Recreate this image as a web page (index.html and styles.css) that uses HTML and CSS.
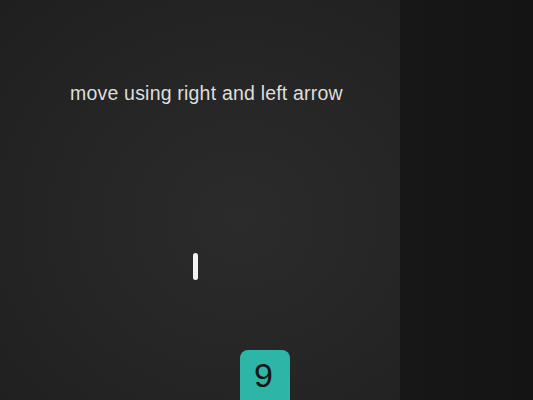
FILE: index.html
```html
<!DOCTYPE html>
<html>
<head>
<meta charset="utf-8">
<link rel="stylesheet" href="styles.css">
</head>
<body>
<div class="page">
  <div class="game">
    <p class="hint">move using right and left arrow</p>
    <div class="paddle"></div>
    <div class="tile">9</div>
  </div>
  <div class="side"></div>
</div>
</body>
</html>
```
FILE: styles.css
```css
html, body {
  margin: 0;
  padding: 0;
  width: 533px;
  height: 400px;
  overflow: hidden;
  background: #151515;
}
.page {
  display: flex;
  width: 533px;
  height: 400px;
}
.game {
  position: relative;
  width: 400px;
  height: 400px;
  flex: none;
  background: radial-gradient(ellipse at 60% 55%, #2b2b2b 0%, #262626 45%, #1f1f1f 100%);
  overflow: hidden;
}
.side {
  flex: 1;
  background: linear-gradient(90deg, #171717 0%, #141414 100%);
}
.hint {
  margin: 0;
  padding: 82px 0 0 70px;
  font-family: "Liberation Sans", Arial, sans-serif;
  font-size: 19.5px;
  letter-spacing: 0.2px;
  line-height: 22px;
  color: #dedede;
}
.paddle {
  position: absolute;
  left: 193px;
  top: 253px;
  width: 5px;
  height: 27px;
  border-radius: 3px;
  background: #f2f2f2;
}
.tile {
  position: absolute;
  left: 240px;
  top: 350px;
  width: 50px;
  height: 60px;
  border-radius: 8px;
  background: #2db5a7;
  color: #151515;
  font-family: "Liberation Sans", Arial, sans-serif;
  font-size: 34px;
  line-height: 50px;
  text-indent: -3px;
  text-align: center;
}
```
